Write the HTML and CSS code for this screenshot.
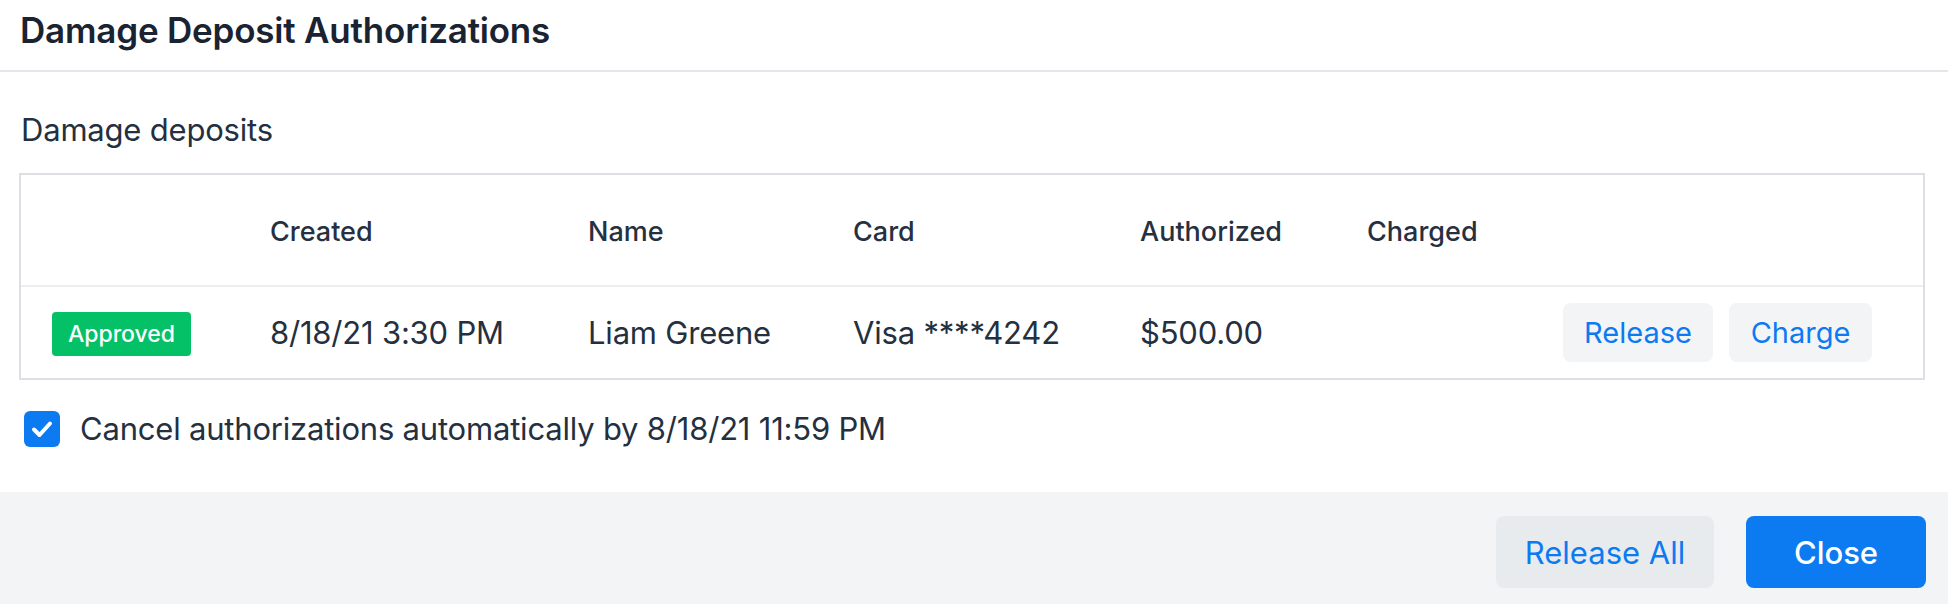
FILE: index.html
```html
<!DOCTYPE html>
<html lang="en">
<head>
<meta charset="utf-8">
<title>Damage Deposit Authorizations</title>
<link rel="stylesheet" href="styles.css">
</head>
<body>
<div class="modal">
  <header class="modal-header">
    <h1 class="modal-title">Damage Deposit Authorizations</h1>
  </header>
  <section class="modal-body">
    <div class="section-label">Damage deposits</div>
    <div class="table">
      <div class="row head">
        <div class="cell first"></div>
        <div class="cell">Created</div>
        <div class="cell">Name</div>
        <div class="cell">Card</div>
        <div class="cell">Authorized</div>
        <div class="cell">Charged</div>
        <div class="cell"></div>
      </div>
      <div class="row body-row">
        <div class="cell first"><span class="badge">Approved</span></div>
        <div class="cell">8/18/21 3:30 PM</div>
        <div class="cell">Liam Greene</div>
        <div class="cell">Visa ****4242</div>
        <div class="cell">$500.00</div>
        <div class="cell"></div>
        <div class="cell actions">
          <button class="btn-light">Release</button>
          <button class="btn-light">Charge</button>
        </div>
      </div>
    </div>
    <label class="check-row">
      <span class="checkbox">
        <svg viewBox="0 0 36 36" width="36" height="36"><path d="M10 18.5l5.5 5.5L26 12.5" fill="none" stroke="#fff" stroke-width="4" stroke-linecap="round" stroke-linejoin="round"/></svg>
      </span>
      <span class="check-text">Cancel authorizations automatically by 8/18/21 11:59 PM</span>
    </label>
  </section>
  <footer class="modal-footer">
    <button class="btn-secondary">Release All</button>
    <button class="btn-primary">Close</button>
  </footer>
</div>
</body>
</html>
```

FILE: styles.css
```css
* { box-sizing: border-box; }
html, body {
  margin: 0;
  padding: 0;
  background: #ffffff;
}
body {
  font-family: Inter, "Noto Sans", "Liberation Sans", sans-serif;
  color: #243040;
  width: 1948px;
  height: 604px;
  overflow: hidden;
}
.modal {
  display: flex;
  flex-direction: column;
  height: 604px;
}
.modal-header {
  height: 72px;
  border-bottom: 2px solid #e3e7ec;
  display: flex;
  align-items: center;
  padding-left: 20px;
  padding-bottom: 10px;
}
.modal-title {
  margin: 0;
  font-size: 35px;
  font-weight: 600;
  color: #1a2332;
  letter-spacing: -0.2px;
}
.modal-body {
  padding: 38px 23px 0 19px;
  flex: 0 0 420px;
  height: 420px;
}
.section-label {
  font-size: 31px;
  line-height: 40px;
  color: #243040;
  padding-left: 2px;
  letter-spacing: -0.2px;
}
.table {
  margin-top: 23px;
  border: 2px solid #dcdfe4;
}
.row {
  display: grid;
  grid-template-columns: 249px 318px 265px 287px 227px 120px 1fr;
  align-items: center;
}
.row.head {
  height: 112px;
  border-bottom: 2px solid #eceef1;
  font-size: 27px;
  font-weight: 500;
  color: #27303f;
  padding-top: 2px;
}
.row.body-row {
  height: 91px;
  font-size: 31px;
  color: #243040;
  letter-spacing: -0.2px;
}
.cell.first {
  padding-left: 31px;
}
.badge {
  display: inline-flex;
  align-items: center;
  justify-content: center;
  width: 139px;
  height: 44px;
  background: #04c167;
  color: #ffffff;
  border-radius: 4px;
  font-size: 23px;
  font-weight: 500;
  letter-spacing: 0;
  margin-top: 2px;
}
.actions {
  display: flex;
  justify-content: flex-end;
  gap: 16px;
  padding-right: 51px;
}
button {
  font-family: inherit;
  border: none;
  cursor: pointer;
}
.btn-light {
  height: 59px;
  padding: 0;
  background: #f3f4f6;
  color: #0c7bf2;
  border-radius: 8px;
  font-size: 29px;
  font-weight: 400;
}
.btn-light:first-child { width: 150px; }
.btn-light:last-child { width: 143px; }
.check-row {
  display: flex;
  align-items: center;
  gap: 20px;
  margin-top: 30px;
  padding-left: 5px;
}
.checkbox {
  width: 36px;
  height: 36px;
  background: #0c7bf2;
  border-radius: 6px;
  display: flex;
}
.check-text {
  font-size: 31px;
  color: #243040;
  letter-spacing: -0.2px;
}
.modal-footer {
  flex: 1;
  background: #f3f4f6;
  display: flex;
  justify-content: flex-end;
  align-items: flex-start;
  gap: 32px;
  padding: 24px 22px 0 0;
}
.btn-secondary,
.btn-primary {
  height: 72px;
  border-radius: 8px;
  font-size: 31px;
}
.btn-secondary {
  width: 218px;
  background: #e8ebee;
  color: #0c7bf2;
  font-weight: 400;
}
.btn-primary {
  width: 180px;
  background: #0c7af0;
  color: #ffffff;
  font-weight: 500;
}
```
